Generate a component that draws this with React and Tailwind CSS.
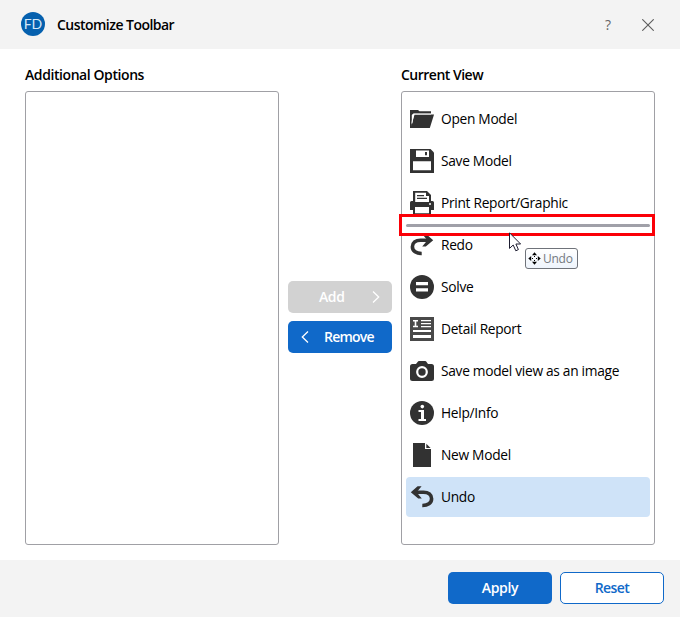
import React from "react";

const INK = "#323232";

function Icon({ children }) {
  return (
    <svg width="24" height="24" viewBox="0 0 24 24" fill={INK} className="block shrink-0">
      {children}
    </svg>
  );
}

const OpenIcon = () => (
  <Icon>
    <path d="M0 3H8L9.5 4.2H21V6.8H3.2L1.8 8V21H0Z" />
    <path d="M4.6 7.6H24L19.8 21H0.6Z" />
    <path d="M1.9 16.5L3.4 7H21" fill="none" stroke="#fff" strokeWidth="1" />
  </Icon>
);

const SaveIcon = () => (
  <Icon>
    <path d="M0 0H20.5L24 3.5V24H0Z" />
    <path fill="#fff" d="M6 1.5H19V8H6ZM3 12.3H21V21.2H3Z" />
    <path d="M15 3H17V6.3H15Z" />
  </Icon>
);

const PrintIcon = () => (
  <Icon>
    <path d="M3 0H17L21 4V11H3Z" />
    <path fill="#fff" d="M5.2 1.7H16V5H19V11H5.2Z" />
    <path d="M7 4H14V5.3H7ZM7 6.8H17V8.1H7Z" />
    <path d="M0 11.5Q0 10 1.5 10H4V11H20V10H22.5Q24 10 24 11.5V19H0Z" />
    <path fill="#fff" d="M19 12.3H21V13.8H19ZM4.5 16H19.5V23H4.5Z" />
    <path d="M3 15.5H5V24H3ZM19 15.5H21V24H19ZM3 22.3H21V24H3Z" />
  </Icon>
);

const UndoArrow = () => (
  <>
    <path d="M5 7.2H13.5C18.4 7.2 21.6 9.8 21.6 13.8C21.6 18 17.6 20.6 12.3 20.5" fill="none" stroke={INK} strokeWidth="3.6" />
    <path d="M0.8 7.3L7.6 1.3H11.6L6.6 7.2L11.8 13.4H8.2Z" />
  </>
);

const UndoIcon = () => (
  <Icon>
    <UndoArrow />
  </Icon>
);

const RedoIcon = () => (
  <Icon>
    <g transform="translate(24 0) scale(-1 1)">
      <UndoArrow />
    </g>
  </Icon>
);

const SolveIcon = () => (
  <Icon>
    <circle cx="12" cy="12" r="12" />
    <path fill="#fff" d="M6 7H18V10.2H6ZM6 13.2H18V16.4H6Z" />
  </Icon>
);

const DetailIcon = () => (
  <Icon>
    <path d="M0 0H24V24H0Z" fill="#494949" />
    <path
      fill="#fff"
      d="M3 3H8V4.4H6.3V8.8H8V10.2H3V8.8H4.7V4.4H3ZM11 3H21V4.3H11ZM11 6H21V7.3H11ZM11 9H21V10.3H11ZM3 13H21V15H3ZM3 18H21V21H3Z"
    />
  </Icon>
);

const CameraIcon = () => (
  <Icon>
    <path d="M2.5 5H6L8.2 2.3Q8.6 2 9.2 2H15Q15.6 2 16 2.3L18 5H21.5Q24 5 24 7.5V19.5Q24 22 21.5 22H2.5Q0 22 0 19.5V7.5Q0 5 2.5 5Z" />
    <circle cx="12" cy="13" r="4.8" fill="none" stroke="#fff" strokeWidth="2.2" />
  </Icon>
);

const InfoIcon = () => (
  <Icon>
    <circle cx="12" cy="12" r="12" />
    <circle cx="12.3" cy="5.6" r="1.8" fill="#fff" />
    <path fill="#fff" d="M8.5 9H14V18H16V20H8.5V18H11V11H8.5Z" />
  </Icon>
);

const NewIcon = () => (
  <Icon>
    <path d="M3 0H15V6H21V24H3Z" />
    <path d="M16.3 0.8L20.6 5H16.3Z" />
  </Icon>
);

const items = [
  { label: "Open Model", icon: OpenIcon },
  { label: "Save Model", icon: SaveIcon },
  { label: "Print Report/Graphic", icon: PrintIcon },
  { label: "Redo", icon: RedoIcon },
  { label: "Solve", icon: SolveIcon },
  { label: "Detail Report", icon: DetailIcon },
  { label: "Save model view as an image", icon: CameraIcon },
  { label: "Help/Info", icon: InfoIcon },
  { label: "New Model", icon: NewIcon },
  { label: "Undo", icon: UndoIcon, selected: true },
];

function Header() {
  return (
    <header className="flex h-[49px] shrink-0 items-center bg-[#f3f3f3] pl-[21px] pr-[25px]">
      <div className="mb-px flex size-6 items-center justify-center rounded-full bg-[#0560ae] font-['Lato','Open_Sans',sans-serif] text-[14px] leading-none text-[#d5e8f8]">
        FD
      </div>
      <h1 className="ml-3 grow text-[14px] leading-5 font-semibold tracking-[-0.53px]">Customize Toolbar</h1>
      <button className="w-3 text-center text-[14px] leading-5 text-[#666]">?</button>
      <svg width="12" height="12" viewBox="0 0 12 12" className="ml-[28px] mr-px" stroke="#5c5c5c" strokeWidth="1.1">
        <path d="M0.3 0.3L11.7 11.7M11.7 0.3L0.3 11.7" />
      </svg>
    </header>
  );
}

function DropMarker() {
  return (
    <>
      <div className="absolute top-[122px] -left-[3px] flex h-[22px] w-[256px] items-center border-[3px] border-[#fb0007] pr-[2px] pl-1">
        <div className="h-[3px] w-full rounded-full bg-[#a0a0a8]" />
      </div>
      <svg width="14" height="20" viewBox="0 0 14 20" className="absolute top-[140px] left-[107px]">
        <path
          d="M0.5 0.8V16.4L4.2 13L6.8 18.8L9.4 17.6L6.9 12H11.6Z"
          fill="#fff"
          stroke="#1c1c30"
          strokeWidth="1"
        />
      </svg>
      <div className="absolute top-[156px] left-[123px] flex h-[21px] w-[53px] items-center rounded-[3px] border border-[#6f737a] bg-linear-to-b from-white to-[#eef4fc] pl-[2px]">
        <svg width="13" height="13" viewBox="0 0 13 13" fill="#000" className="shrink-0">
          <path d="M6.5 0.3L9 3.2H4ZM6.5 12.7L9 9.8H4ZM0.3 6.5L3.2 4V9ZM12.7 6.5L9.8 4V9Z" />
          <path d="M6 4H7V5H6ZM6 8H7V9H6ZM4 6H5V7H4ZM8 6H9V7H8Z" />
        </svg>
        <span className="ml-[2px] text-[12px] leading-4 tracking-[-0.25px] text-[#747980]">Undo</span>
      </div>
    </>
  );
}

function Chevron({ flip }) {
  return (
    <svg
      width="8"
      height="12"
      viewBox="0 0 8 12"
      fill="none"
      stroke="currentColor"
      strokeWidth="1.3"
      className={flip ? "-scale-x-100" : ""}
    >
      <path d="M1 0.5L6.7 6L1 11.5" />
    </svg>
  );
}

export default function App() {
  return (
    <div className="flex h-[617px] w-[680px] flex-col overflow-hidden bg-white font-['Open_Sans','Noto_Sans',sans-serif] text-[14px] text-black">
      <Header />
      <main className="flex grow px-[25px] pt-4">
        <section className="w-[254px]">
          <h2 className="h-[26px] leading-5 font-semibold tracking-[-0.42px]">Additional Options</h2>
          <div className="h-[454px] rounded-[3px] border border-[#a0a0a5]" />
        </section>
        <div className="flex w-[122px] flex-col items-center gap-2 pt-[216px]">
          <button className="flex h-8 w-[104px] items-center rounded-[5px] bg-[#d2d2d2] pr-3 pl-[31px] font-semibold text-white">
            <span className="grow pb-px text-left tracking-[-0.4px]">Add</span>
            <Chevron />
          </button>
          <button className="flex h-8 w-[104px] items-center rounded-[5px] bg-[#1069c9] pl-[13px] font-semibold text-white">
            <Chevron flip />
            <span className="ml-[15px] pb-px tracking-[-0.8px]">Remove</span>
          </button>
        </div>
        <section className="w-[254px]">
          <h2 className="h-[26px] leading-5 font-semibold tracking-[-0.5px]">Current View</h2>
          <div className="relative h-[454px] rounded-[3px] border border-[#a0a0a5] px-1 pt-[7px]">
            <ul className="flex flex-col gap-[2px]">
              {items.map(({ label, icon: Glyph, selected }) => (
                <li
                  key={label}
                  className={
                    selected
                      ? "flex h-10 items-center gap-[7px] rounded-[4px] bg-[#cfe3f8] px-1"
                      : "flex h-10 items-center gap-[7px] px-1"
                  }
                >
                  <Glyph />
                  <span className="text-[13.75px] leading-5 tracking-[-0.3px] whitespace-nowrap">{label}</span>
                </li>
              ))}
            </ul>
            <DropMarker />
          </div>
        </section>
      </main>
      <footer className="flex h-[57px] shrink-0 items-start justify-end gap-2 bg-[#f3f3f3] pt-3 pr-4">
        <button className="h-8 w-[104px] rounded-[5px] bg-[#1069c9] pb-px font-semibold tracking-[-0.3px] text-white">Apply</button>
        <button className="h-8 w-[104px] rounded-[5px] border border-[#1069c9] bg-white pb-px font-semibold tracking-[-0.6px] text-[#1069c9]">
          Reset
        </button>
      </footer>
    </div>
  );
}
